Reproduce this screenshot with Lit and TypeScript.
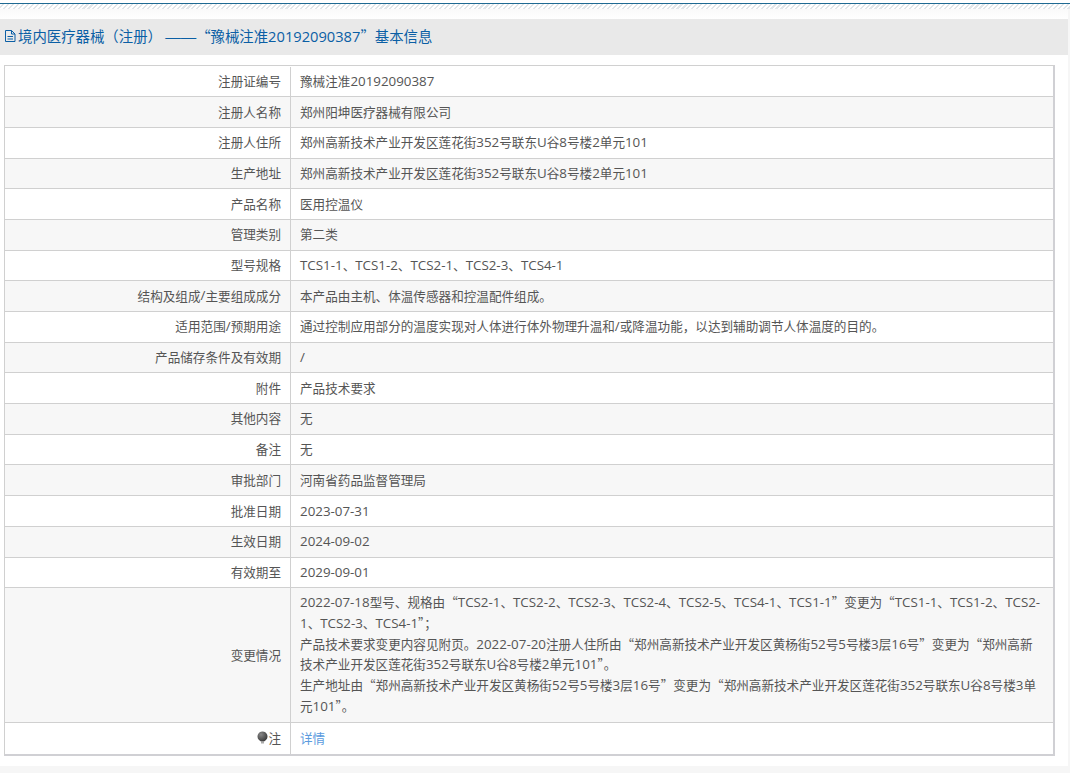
import { LitElement, html, css } from "lit";
import { customElement } from "lit/decorators.js";

const rows: [string, string][] = [
  ["注册证编号", "豫械注准20192090387"],
  ["注册人名称", "郑州阳坤医疗器械有限公司"],
  ["注册人住所", "郑州高新技术产业开发区莲花街352号联东U谷8号楼2单元101"],
  ["生产地址", "郑州高新技术产业开发区莲花街352号联东U谷8号楼2单元101"],
  ["产品名称", "医用控温仪"],
  ["管理类别", "第二类"],
  ["型号规格", "TCS1-1、TCS1-2、TCS2-1、TCS2-3、TCS4-1"],
  ["结构及组成/主要组成成分", "本产品由主机、体温传感器和控温配件组成。"],
  ["适用范围/预期用途", "通过控制应用部分的温度实现对人体进行体外物理升温和/或降温功能，以达到辅助调节人体温度的目的。"],
  ["产品储存条件及有效期", "/"],
  ["附件", "产品技术要求"],
  ["其他内容", "无"],
  ["备注", "无"],
  ["审批部门", "河南省药品监督管理局"],
  ["批准日期", "2023-07-31"],
  ["生效日期", "2024-09-02"],
  ["有效期至", "2029-09-01"],
];

const changes = [
  "2022-07-18型号、规格由“TCS2-1、TCS2-2、TCS2-3、TCS2-4、TCS2-5、TCS4-1、TCS1-1”变更为“TCS1-1、TCS1-2、TCS2-1、TCS2-3、TCS4-1”；",
  "产品技术要求变更内容见附页。2022-07-20注册人住所由“郑州高新技术产业开发区黄杨街52号5号楼3层16号”变更为“郑州高新技术产业开发区莲花街352号联东U谷8号楼2单元101”。",
  "生产地址由“郑州高新技术产业开发区黄杨街52号5号楼3层16号”变更为“郑州高新技术产业开发区莲花街352号联东U谷8号楼3单元101”。",
];

// latin runs are slightly larger than the CJK text around them
const mixed = (text: string) =>
  text
    .split(/([\x21-\x7e]+)/)
    .map((part, i) => (i % 2 ? html`<span class="latin">${part}</span>` : part));

@customElement("app-root")
export class AppRoot extends LitElement {
  static styles = css`
    :host {
      display: block;
      height: 773px;
      overflow: hidden;
      background: #f6f6f6;
      font-family: "Noto Sans CJK SC", "Open Sans", sans-serif;
      font-size: 12.6px;
      color: #555;
    }
    .latin {
      font-family: "Open Sans", sans-serif;
      font-size: 1.06em;
    }
    .top {
      height: 9px;
      background: #fff;
      padding-top: 3px;
      box-sizing: border-box;
    }
    .stripes {
      height: 6px;
      border-top: 1px solid #1f6a93;
      box-sizing: border-box;
      background: repeating-linear-gradient(135deg, #fff 0 2px, #e2e6e9 2px 3.5px);
    }
    .panel {
      margin-right: 2px;
      padding: 10px 0;
      background: linear-gradient(#fafafa 0, #fff 10px);
    }
    .head {
      height: 36px;
      box-sizing: border-box;
      padding: 0 0 3px 4px;
      background: #e9e9e9;
      display: flex;
      align-items: center;
      gap: 1px;
      font-size: 14.4px;
      color: #0b5fa5;
    }
    .head .latin { font-size: 1.02em; }
    .head .dash {
      font-family: "Liberation Sans", sans-serif;
      font-size: 15.5px;
    }
    .head svg { flex: none; }
    .tbl {
      margin: 10px 13px 0 4px;
      padding-top: 0.55px;
      border: 1px solid #d0d0d0;
      border-right: 2px solid #d0d0d4;
      border-bottom: 2px solid #d0d0d4;
    }
    .row {
      display: grid;
      grid-template-columns: 286px 1fr;
      box-sizing: border-box;
      height: 30.7px;
      background: #fff;
      border-bottom: 1px solid #d0d0d0;
    }
    .row:nth-child(even) { background: #f7f7f7; }
    .row.changes { height: 134.6px; }
    .row.note {
      height: 31.5px;
      border-bottom: none;
    }
    .k {
      display: flex;
      align-items: center;
      justify-content: flex-end;
      padding: 0 9px 2px 0;
      border-right: 1px solid #d0d0d0;
    }
    .v {
      display: flex;
      align-items: center;
      padding: 0 9px 2px;
    }
    .multi {
      display: block;
      padding: 4px 9px;
      line-height: 20.7px;
    }
    a {
      color: #5b9bde;
      text-decoration: none;
    }
  `;

  render() {
    return html`
      <div class="top"><div class="stripes"></div></div>
      <div class="panel" lang="zh-CN">
        <div class="head">
          <svg width="13" height="14" viewBox="0 0 13 14" fill="none" stroke="#0b5fa5" stroke-width="1">
            <path d="M1.500 1.500h6l3.500 3.500v7.500h-9.500z M7.500 1.500v3.500h3.500 M3.500 7.500h5.500 M3.500 10h5.500" />
          </svg>
          <span>境内医疗器械（注册） <span class="dash">——</span>“豫械注准${mixed("20192090387")}”基本信息</span>
        </div>
        <div class="tbl">
          ${rows.map(
            ([k, v]) => html`<div class="row">
              <div class="k">${mixed(k)}</div>
              <div class="v"><span>${mixed(v)}</span></div>
            </div>`
          )}
          <div class="row changes">
            <div class="k">变更情况</div>
            <div class="v multi">${changes.map((c) => html`<div>${mixed(c)}</div>`)}</div>
          </div>
          <div class="row note">
            <div class="k">
              <svg width="11" height="13" viewBox="0 0 11 13">
                <defs>
                  <radialGradient id="bulb" cx="0.35" cy="0.3" r="0.8">
                    <stop offset="0" stop-color="#888" />
                    <stop offset="1" stop-color="#333" />
                  </radialGradient>
                </defs>
                <path d="M5.500 0.500a5 5 0 0 1 3.500 8.500l-2 1.500h-3l-2-1.500a5 5 0 0 1 3.500-8.500z" fill="url(#bulb)" />
                <rect x="4" y="11" width="3" height="1.500" fill="#aaa" />
              </svg>
              <span>注</span>
            </div>
            <div class="v"><a href="#">详情</a></div>
          </div>
        </div>
      </div>
    `;
  }
}
